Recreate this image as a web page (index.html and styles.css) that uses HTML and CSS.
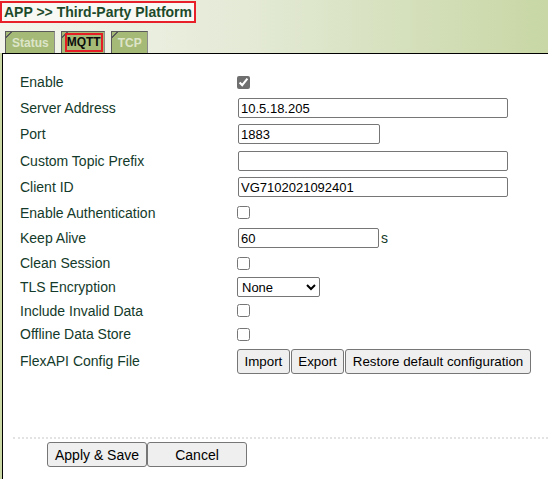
FILE: index.html
```html
<!DOCTYPE html>
<html>
<head>
<meta charset="utf-8">
<link rel="stylesheet" href="styles.css">
</head>
<body>
<div class="header">
  <div class="title">APP &gt;&gt; Third-Party Platform</div>
  <div class="tabs">
    <div class="tab">Status</div>
    <div class="tab tab-active"><span class="tab-mark">MQTT</span></div>
    <div class="tab">TCP</div>
  </div>
</div>
<div class="panel">
  <div class="form">
    <div class="label">Enable</div>
    <div class="field"><input type="checkbox" class="check checked" checked></div>

    <div class="label">Server Address</div>
    <div class="field"><input type="text" class="text wide" value="10.5.18.205"></div>

    <div class="label">Port</div>
    <div class="field"><input type="text" class="text narrow" value="1883"></div>

    <div class="label">Custom Topic Prefix</div>
    <div class="field"><input type="text" class="text wide" value=""></div>

    <div class="label">Client ID</div>
    <div class="field"><input type="text" class="text wide" value="VG7102021092401"></div>

    <div class="label">Enable Authentication</div>
    <div class="field"><input type="checkbox" class="check"></div>

    <div class="label">Keep Alive</div>
    <div class="field"><input type="text" class="text narrow2" value="60"><span class="unit">s</span></div>

    <div class="label">Clean Session</div>
    <div class="field"><input type="checkbox" class="check"></div>

    <div class="label">TLS Encryption</div>
    <div class="field"><select class="select"><option>None</option></select></div>

    <div class="label">Include Invalid Data</div>
    <div class="field"><input type="checkbox" class="check"></div>

    <div class="label">Offline Data Store</div>
    <div class="field"><input type="checkbox" class="check"></div>

    <div class="label">FlexAPI Config File</div>
    <div class="field buttons"><button class="btn">Import</button><button class="btn">Export</button><button class="btn">Restore default configuration</button></div>
  </div>
  <div class="footer">
    <button class="btn big">Apply &amp; Save</button><button class="btn big">Cancel</button>
  </div>
</div>
</body>
</html>
```

FILE: styles.css
```css
html, body {
  margin: 0;
  padding: 0;
}
body {
  width: 548px;
  height: 479px;
  overflow: hidden;
  background: #c9d8a4;
  font-family: "Liberation Sans", Arial, sans-serif;
}
.header {
  height: 53px;
  background: linear-gradient(to right, #f3f5ec 0%, #e4ead6 45%, #c8d7a5 100%);
  display: flex;
  flex-direction: column;
  justify-content: space-between;
  box-sizing: border-box;
  padding-top: 1px;
}
.title {
  align-self: flex-start;
  width: 196px;
  height: 22px;
  box-sizing: border-box;
  border: 2px solid #e8202a;
  background: #f8f9f4;
  color: #1d4a2b;
  font-weight: bold;
  font-size: 14px;
  line-height: 18px;
  padding-left: 2px;
  white-space: nowrap;
}
.tabs {
  display: flex;
  gap: 6px;
  padding-left: 5px;
  align-items: flex-end;
}
.tab {
  height: 22px;
  box-sizing: border-box;
  border-top: 1px solid #5a5a5a;
  border-left: 1px solid #5a5a5a;
  border-right: 1px solid #8c8c8c;
  background:
    linear-gradient(135deg, transparent 0 3px, #5a5a5a 3px 4.5px, transparent 4.5px),
    #a6ba77;
  color: #dde5c9;
  font-weight: bold;
  font-size: 12px;
  line-height: 20px;
  padding: 0 5px 0 6px;
  display: flex;
  align-items: center;
}
.tab-active {
  padding: 0 1px 0 3px;
}
.tab-mark {
  display: block;
  color: #0c0c0c;
  border: 2px solid #e51e25;
  line-height: 15px;
  padding: 0;
}
.panel {
  margin-left: 2px;
  height: 426px;
  background: #fff;
  border-top: 1px solid #000;
  border-left: 1px solid #000;
  box-sizing: border-box;
}
.form {
  display: grid;
  grid-template-columns: 217px 1fr;
  grid-template-rows: 26px 26px 26px 27px 26px 25px 26px 24px 24px 23px 24px 30px;
  padding: 15px 0 0 17px;
  color: #133a2a;
  font-size: 14px;
}
.label {
  display: flex;
  align-items: center;
  white-space: nowrap;
}
.field {
  display: flex;
  align-items: center;
}
.check {
  margin: 0;
  width: 13px;
  height: 13px;
}
.checked {
  accent-color: #6f6f6f;
}
.text {
  height: 20px;
  box-sizing: border-box;
  margin: 0 0 0 1px;
  padding: 1px 2px;
  border: 1px solid #767676;
  border-radius: 2px;
  font-family: "Liberation Sans", Arial, sans-serif;
  font-size: 13px;
  color: #000;
}
.wide { width: 270px; }
.narrow { width: 142px; }
.narrow2 { width: 141px; }
.unit {
  margin-left: 2px;
  font-size: 14px;
  color: #133a2a;
}
.select {
  width: 83px;
  height: 20px;
  margin: 0;
  font-family: "Liberation Sans", Arial, sans-serif;
  font-size: 13px;
  border: 1px solid #767676;
  border-radius: 2px;
  background: #fff;
  color: #000;
}
.buttons {
  gap: 1px;
}
.btn {
  height: 25px;
  margin: 0;
  padding: 1px 6.5px;
  background: #efefef;
  border: 1px solid #767676;
  border-radius: 3px;
  font-family: "Liberation Sans", Arial, sans-serif;
  font-size: 13.33px;
  color: #000;
  white-space: nowrap;
}
.footer {
  margin: 61px 0 0 10px;
  border-top: 2px dotted #e3e3e3;
  padding: 3px 0 0 34px;
  display: flex;
}
.big {
  width: 100px;
  padding: 1px 4px;
  font-size: 14px;
}
```
